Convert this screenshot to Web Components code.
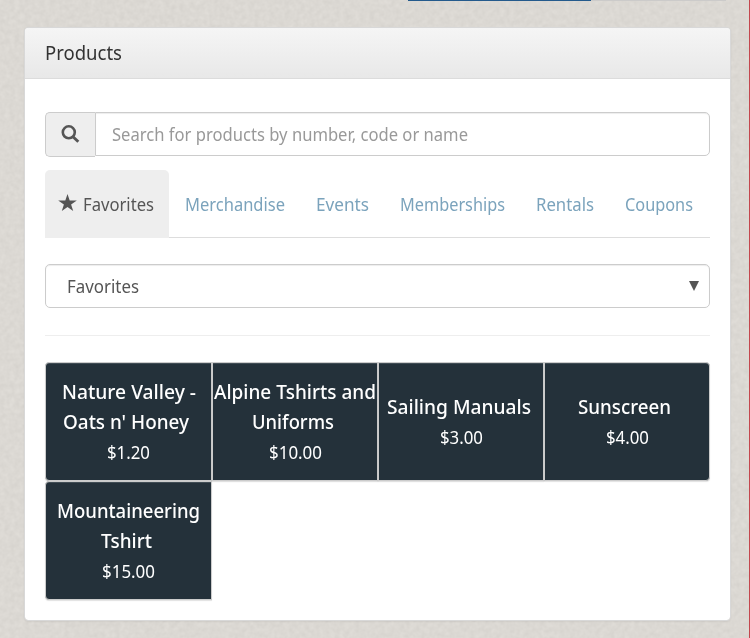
<!DOCTYPE html>
<html lang="en"><head><meta charset="utf-8"><title>Products</title>
<style>
html,body{margin:0;height:638px;overflow:hidden;background:#dad7d2}
body{font-family:"Noto Sans","Open Sans",sans-serif;color:#555}
</style></head><body>
<pos-page>
<product-panel>
<fit-text slot="title" w="77">Products</fit-text>
<search-box><fit-text w="356">Search for products by number, code or name</fit-text></search-box>
<tab-strip>
<tab-item active style="--l:13px;width:124px"><fit-text w="71">Favorites</fit-text></tab-item>
<tab-item style="--l:16px;width:131px"><fit-text w="100">Merchandise</fit-text></tab-item>
<tab-item style="--l:16px;width:84px"><fit-text w="53">Events</fit-text></tab-item>
<tab-item style="--l:16px;width:136px"><fit-text w="105">Memberships</fit-text></tab-item>
<tab-item style="--l:16px;width:90px"><fit-text w="58">Rentals</fit-text></tab-item>
<tab-item style="--l:15px;width:100px"><fit-text w="68">Coupons</fit-text></tab-item>
</tab-strip>
<select-box><fit-text w="72">Favorites</fit-text></select-box>
<product-grid>
<product-tile style="border-radius:4px 0 0 4px"><fit-text w="134">Nature Valley -</fit-text><fit-text class="last" w="126">Oats n' Honey</fit-text><fit-text slot="price" w="43">$1.20</fit-text></product-tile>
<product-tile><fit-text w="162">Alpine Tshirts and</fit-text><fit-text class="last" w="82">Uniforms</fit-text><fit-text slot="price" w="53">$10.00</fit-text></product-tile>
<product-tile style="--top:29px"><fit-text class="last" w="144">Sailing Manuals</fit-text><fit-text slot="price" w="43">$3.00</fit-text></product-tile>
<product-tile style="--top:29px;border-radius:0 4px 4px 0"><fit-text class="last" w="93">Sunscreen</fit-text><fit-text slot="price" w="43">$4.00</fit-text></product-tile>
<product-tile style="border-radius:4px 0 0 4px"><fit-text w="143">Mountaineering</fit-text><fit-text class="last" w="51">Tshirt</fit-text><fit-text slot="price" w="53">$15.00</fit-text></product-tile>
</product-grid>
</product-panel>
</pos-page>
<script>
const define=(name,html)=>customElements.define(name,class extends HTMLElement{
  constructor(){super();this.attachShadow({mode:'open'}).innerHTML=html;}
});

// A single line of text condensed to the width given in the "w" attribute.
customElements.define('fit-text',class extends HTMLElement{
  constructor(){
    super();
    this.attachShadow({mode:'open'}).innerHTML=`<style>:host{display:block;flex:none;white-space:nowrap}
      span{display:inline-block;transform-origin:0 50%}</style><span><slot></slot></span>`;
  }
  connectedCallback(){
    const w=+this.getAttribute('w'),s=this.shadowRoot.querySelector('span');
    this.style.width=w+'px';
    this.fit=()=>{s.style.transform='none';const n=s.getBoundingClientRect().width;if(n)s.style.transform=`scaleX(${w/n})`;};
    requestAnimationFrame(this.fit);
  }
});

define('pos-page',`<style>
:host{display:block;position:relative;box-sizing:border-box;width:750px;height:638px;padding:27px 19px 17px 24px;overflow:hidden}
svg{position:absolute;inset:0}
.bar{position:absolute;top:0;left:408px;width:183px;height:1px;background:#245a8c}
.bar2{position:absolute;top:0;left:591px;width:135px;height:1px;background:#cccbca}
.edge{position:absolute;right:0;top:0;width:1px;height:638px;background:#c4474e}
</style>
<svg width="750" height="638"><defs><filter id="p" x="0" y="0" width="100%" height="100%" color-interpolation-filters="sRGB">
<feTurbulence type="fractalNoise" baseFrequency=".2" numOctaves="2" seed="4" stitchTiles="stitch"/>
<feColorMatrix values=".055 0 0 0 .832  .055 0 0 0 .820  .055 0 0 0 .800  0 0 0 0 1"/></filter></defs>
<rect width="750" height="638" filter="url(#p)"/></svg>
<div class="bar"></div><div class="bar2"></div><div class="edge"></div><slot></slot>`);

define('product-panel',`<style>
:host{display:flex;flex-direction:column;position:relative;box-sizing:border-box;width:707px;height:594px;background:#fff;background-clip:padding-box;border:1px solid #d8d8d8;border-radius:4px;box-shadow:0 1px 2px rgba(0,0,0,.06)}
header{height:50px;border-bottom:1px solid #dcdcdc;border-radius:3px 3px 0 0;background:linear-gradient(#f5f5f5,#e8e8e8);padding-left:20px;font-size:20px;line-height:50px;color:#333}
main{display:flex;flex-direction:column;padding:33px 20px 0}
</style><header><slot name="title"></slot></header><main><slot></slot></main>`);

define('search-box',`<style>
:host{display:flex;align-items:flex-start;height:45px;margin-bottom:13px;font-size:17.5px;color:#999}
.a{box-sizing:border-box;width:50px;height:45px;border:1px solid #ccc;border-right:0;border-radius:5px 0 0 5px;background:#eee;display:flex;padding:12px 0 0 15px}
.i{box-sizing:border-box;flex:1;height:44px;border:1px solid #ccc;border-radius:0 5px 5px 0;box-shadow:inset 0 1px 1px rgba(0,0,0,.075);line-height:42px;padding-left:16px}
</style><div class="a"><svg width="19" height="19" viewBox="0 0 19 19" fill="none" stroke="#555"><circle cx="7.8" cy="7.3" r="6" stroke-width="2.6"/><path d="M12 11.8L17.3 16.8" stroke-width="2.9"/></svg></div><div class="i"><slot></slot></div>`);

define('tab-strip',`<style>:host{display:flex;height:67px;border-bottom:1px solid #ddd;margin-bottom:26px}</style><slot></slot>`);

define('tab-item',`<style>
:host{display:flex;box-sizing:border-box;height:68px;flex:none;padding-left:var(--l);font-size:17.5px;line-height:69px;color:#7ba3bc}
svg{display:none;margin:24px 6px 0 0;flex:none}
:host([active]){background:#eee;border-radius:5px 5px 0 0;color:#555}
:host([active]) svg{display:block}
</style><svg width="19" height="18" viewBox="0 0 19 18"><path fill="#555" d="M9.5 0L11.7 6.5H18.8L13.1 10.5L15.2 17L9.5 13L3.8 17L5.9 10.5L.2 6.5H7.3Z"/></svg><slot></slot>`);

define('select-box',`<style>
:host{display:flex;justify-content:space-between;box-sizing:border-box;height:44px;border:1px solid #ccc;border-radius:5px;box-shadow:inset 0 1px 1px rgba(0,0,0,.075);padding:0 10px 0 21px;font-size:17.5px;line-height:42px;margin-bottom:27px}
svg{margin-top:16px}
</style><slot></slot><svg width="10" height="10"><path fill="#555" d="M0 0H10L5 10Z"/></svg>`);

define('product-grid',`<style>
:host{display:grid;grid-template-columns:167px repeat(3,166px);grid-auto-rows:119px;border-top:1px solid #eee;padding-top:26px}
</style><slot></slot>`);

define('product-tile',`<style>
:host{display:flex;flex-direction:column;align-items:center;box-sizing:border-box;padding-top:var(--top,14px);border:1px solid #ccc;background:#24313a;box-shadow:inset 0 2px 0 -1px #414d55,0 1px 1px rgba(0,0,0,.12);color:#fff;font-size:20px;font-weight:500;line-height:30px}
::slotted(.last){margin-right:5px}
.p{font-size:17.5px;font-weight:400}
</style><slot></slot><div class="p"><slot name="price"></slot></div>`);
</script></body></html>
